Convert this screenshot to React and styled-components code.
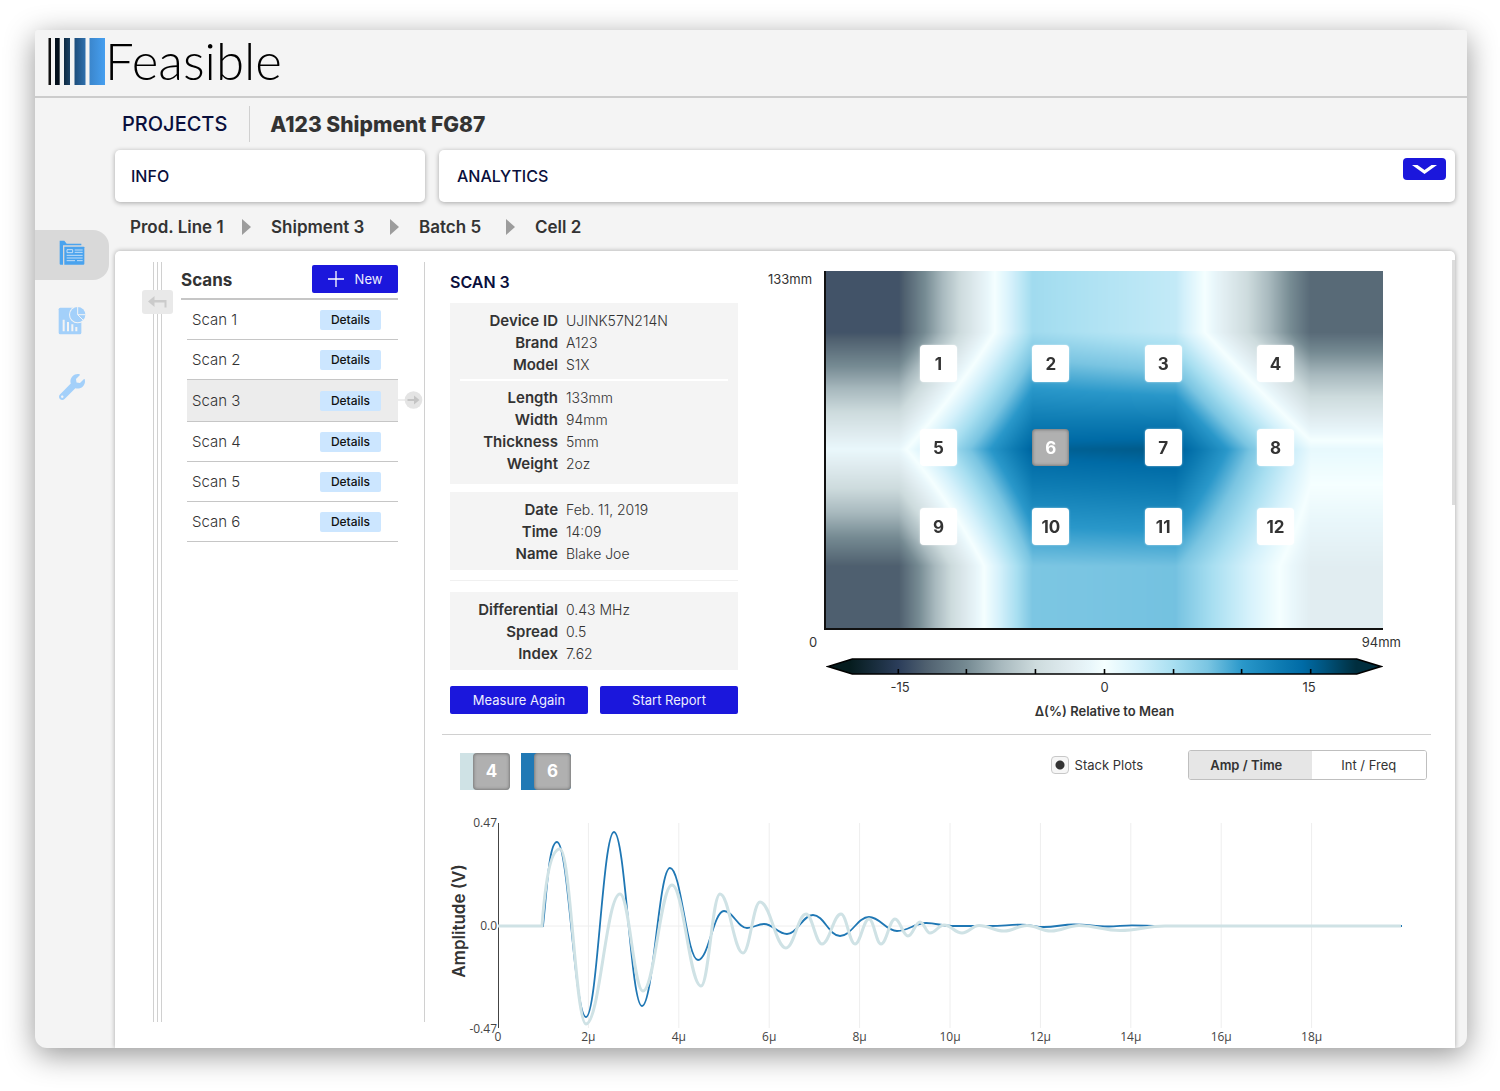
import React, { useEffect, useRef } from "react";
import styled, { createGlobalStyle } from "styled-components";
import { FaWrench } from "react-icons/fa";

const c = {
  page: "#f4f4f4",
  navy: "#0a0f3c",
  text: "#333333",
  line: "#d0d0d0",
  blue: "#1b17dc",
  sky: "#cce6ff",
  icon: "#4aa3ee",
  iconSoft: "#a3d0fa",
  grey: "#b0b0b0",
};

const GlobalStyle = createGlobalStyle`
  *, *::before, *::after { box-sizing: border-box; }
  body {
    margin: 0;
    background: #fff;
    color: ${c.text};
    font-family: Inter, "Open Sans", "Liberation Sans", sans-serif;
  }
  button, input { font-family: inherit; }
  button { cursor: pointer; }
  h1, h2, dl, dd, ol, ul { margin: 0; padding: 0; }
  ol, ul { list-style: none; }
`;

const Page = styled.div`
  padding: 30px 33px 43px 35px;
`;

const Window = styled.div`
  background: ${c.page};
  border-radius: 3px 3px 12px 12px;
  box-shadow: 0 7px 30px rgba(0, 0, 0, 0.42);
`;

const Header = styled.header`
  display: flex;
  align-items: center;
  height: 68px;
  padding: 0 13px 4px;
  border-bottom: 2px solid #cccccc;
`;

const Brand = styled.a`
  display: flex;
  align-items: center;
  color: #000;
  text-decoration: none;
  font: 300 51px/60px Lato, "Open Sans", sans-serif;
`;

const Body = styled.div`
  display: flex;
`;

const Sidebar = styled.nav`
  display: flex;
  flex-direction: column;
  gap: 16px;
  width: 80px;
  padding: 132px 6px 0 0;
`;

const NavLink = styled.a`
  display: flex;
  align-items: center;
  justify-content: center;
  height: 50px;
  padding-bottom: ${(p) => (p.$active ? "4px" : "0")};
  border-radius: 0 16px 16px 0;
  background: ${(p) => (p.$active ? "#d9d9d9" : "transparent")};
  color: ${c.iconSoft};
`;

const Content = styled.main`
  flex: 1;
  min-width: 0;
  padding-right: 12px;
`;

const TitleRow = styled.div`
  display: flex;
  align-items: center;
  height: 52px;
  padding: 0 7px;
`;

const Section = styled.h1`
  padding-right: 22px;
  border-right: 1px solid ${c.line};
  color: ${c.navy};
  font-size: 20px;
  font-weight: 500;
  line-height: 36px;
`;

const ProjectName = styled.h2`
  padding-left: 20px;
  font-size: 21px;
  font-weight: 800;
`;

const Cards = styled.div`
  display: flex;
  gap: 14px;
`;

const Card = styled.section`
  display: flex;
  flex: ${(p) => (p.$wide ? "1" : "0 0 310px")};
  justify-content: space-between;
  height: 52px;
  padding: 8px 9px 8px ${(p) => (p.$wide ? "18px" : "16px")};
  border-radius: 5px;
  background: #fff;
  box-shadow: 0 1px 5px rgba(0, 0, 0, 0.32);
`;

const CardTitle = styled.h2`
  color: ${c.navy};
  font-size: 16px;
  font-weight: 500;
  line-height: 36px;
`;

const Expand = styled.button`
  display: flex;
  align-items: center;
  justify-content: center;
  width: 43px;
  height: 22px;
  padding: 0;
  border: 0;
  border-radius: 4px;
  background: ${c.blue};
`;

const Crumbs = styled.ol`
  display: flex;
  padding-left: 15px;
`;

const Crumb = styled.li`
  display: flex;
  align-items: center;
  justify-content: space-between;
  width: ${(p) => p.$width}px;
  height: 49px;
  padding-right: 20px;
  white-space: nowrap;

  a {
    color: ${c.text};
    font-size: 17px;
    font-weight: 600;
    text-decoration: none;
  }
`;

const Panel = styled.div`
  display: flex;
  position: relative;
  padding-left: 27px;
  padding-right: 24px;
  border-radius: 5px 5px 0 0;
  background: #fff;
  box-shadow: 0 0 5px rgba(0, 0, 0, 0.32);
  clip-path: inset(-6px -6px 0 -6px);
`;

const ScrollThumb = styled.div`
  position: absolute;
  top: 9px;
  right: 0;
  width: 3px;
  height: 245px;
  background: #dcdcdc;
`;

const Rail = styled.div`
  display: flex;
  justify-content: center;
  width: 31px;
  margin: 11px 0 26px;
`;

const RailLines = styled.div`
  position: relative;
  display: flex;
  justify-content: space-between;
  width: 9px;
  border: solid ${c.line};
  border-width: 0 1px;

  &::before {
    content: "";
    width: 1px;
    margin: 0 auto;
    background: ${c.line};
  }
`;

const BackButton = styled.button`
  position: absolute;
  top: 28px;
  left: -12px;
  width: 31px;
  height: 24px;
  padding: 0;
  border: 0;
  border-radius: 3px;
  background: #e9e9e9;

  svg { display: block; margin: auto; }
`;

const Scans = styled.section`
  width: 252px;
  margin: 11px 0 26px;
  padding: 3px 26px 0 8px;
  border-right: 1px solid ${c.line};
`;

const ScansHead = styled.div`
  display: flex;
  align-items: flex-start;
  justify-content: space-between;
  height: 35px;
  border-bottom: 2px solid #c6c6c6;

  h2 {
    font-size: 17px;
    font-weight: 700;
    line-height: 31px;
  }
`;

const Primary = styled.button`
  display: flex;
  flex: ${(p) => (p.$grow ? "1" : "0 0 86px")};
  align-items: center;
  justify-content: center;
  gap: 11px;
  height: 28px;
  padding: 0;
  border: 0;
  border-radius: 2px;
  background: ${c.blue};
  color: #eeeeff;
  font-size: 13px;
  font-weight: 400;
`;

const ScanList = styled.ul`
  padding-left: 6px;
`;

const ScanRow = styled.li`
  position: relative;
  display: flex;
  align-items: center;
  justify-content: space-between;
  height: ${(p) => (p.$active ? "42px" : "40px")};
  padding: 0 17px 0 5px;
  border-bottom: 1px solid #c6c6c6;
  background: ${(p) => (p.$active ? "#ececec" : "transparent")};
  font-size: 15px;
  font-weight: 300;
`;

const Details = styled.button`
  width: 61px;
  height: 20px;
  padding: 0;
  border: 0;
  border-radius: 2px;
  background: ${c.sky};
  color: #111;
  font-size: 12px;
  font-weight: 500;
`;

const RowArrow = styled.svg`
  position: absolute;
  top: 11px;
  left: 100%;
`;

const Main = styled.div`
  flex: 1;
  min-width: 0;
  padding-left: 17px;
`;

const Overview = styled.div`
  display: flex;
  gap: 30px;
  height: 484px;
  padding: 20px 0 0 8px;
  border-bottom: 1px solid ${c.line};
`;

const Facts = styled.section`
  display: flex;
  flex-direction: column;
  flex: 0 0 288px;
`;

const ScanTitle = styled.h2`
  color: ${c.navy};
  font-size: 16px;
  font-weight: 600;
  line-height: 22px;
  margin-bottom: 10px;
`;

const FactBox = styled.dl`
  margin-bottom: 8px;
  padding: 7px 10px ${(p) => (p.$tall ? "9px" : "5px")};
  background: ${c.page};
`;

const Fact = styled.div`
  display: flex;
  gap: 8px;
  font-size: 15px;
  line-height: 22px;

  dt {
    width: 98px;
    font-weight: 600;
    text-align: right;
  }
  dd {
    color: ${c.text};
    font-size: 14px;
    font-weight: 300;
  }
`;

const BoxRule = styled.div`
  height: 2px;
  margin: 3px 0 6px;
  background: #fff;
`;

const FaintRule = styled.hr`
  width: 100%;
  margin: 2px 0 11px;
  border: 0;
  border-top: 1px solid #f0f0f0;
`;

const Actions = styled.div`
  display: flex;
  gap: 12px;
  margin-top: 8px;
`;

const MapArea = styled.section`
  display: flex;
  flex: 1;
  min-width: 0;
  gap: 12px;
  font-size: 13px;
  line-height: 16px;
`;

const MapColumn = styled.div`
  flex: 1;
  min-width: 0;
`;

const YMax = styled.div`
  width: 44px;
  text-align: right;
`;

const Plot = styled.div`
  position: relative;
  height: 359px;
  margin-right: 48px;
  border: solid #111;
  border-width: 0 0 2px 2px;
`;

const HeatCanvas = styled.canvas`
  position: absolute;
  width: 100%;
  height: 100%;
`;

const Points = styled.div`
  position: relative;
  display: grid;
  grid-template-columns: repeat(4, 37px);
  grid-template-rows: 84px 79px 37px;
  justify-content: space-between;
  align-items: start;
  padding: 74px 89px 0 94px;
`;

const Point = styled.button`
  width: 37px;
  height: 37px;
  padding: 0;
  border: 0;
  border-radius: 4px;
  background: ${(p) => (p.$active ? c.grey : "#fff")};
  box-shadow: ${(p) => (p.$active ? "inset 0 0 3px 1px rgba(0,0,0,.3)" : "0 0 2px rgba(255,255,255,.7)")};
  color: ${(p) => (p.$active ? "#fff" : c.text)};
  font-size: 17px;
  font-weight: 700;
`;

const XLabels = styled.div`
  display: flex;
  justify-content: space-between;
  margin: 4px 30px 8px -15px;
`;

const BarArea = styled.div`
  margin: 0 48px 0 2px;

  svg { display: block; width: 100%; }
`;

const BarLabels = styled.div`
  display: flex;
  justify-content: space-between;
  padding: 4px 62px 8px;

  span {
    width: 24px;
    text-align: center;
  }
`;

const BarCaption = styled.div`
  font-weight: 600;
  text-align: center;
`;

const Signal = styled.section`
  svg { display: block; width: 100%; }
`;

const Toolbar = styled.div`
  display: flex;
  align-items: flex-start;
  justify-content: space-between;
  height: 65px;
  padding: 15px 4px 0 18px;
`;

const Group = styled.div`
  display: flex;
  align-items: center;
  gap: ${(p) => p.$gap}px;
`;

const Chip = styled.button`
  width: 50px;
  height: 37px;
  margin-top: 3px;
  padding: 0 0 0 13px;
  border: 0;
  border-radius: 0 4px 4px 0;
  background: ${(p) => p.$color};
  color: #fff;
  font-size: 17px;
  font-weight: 700;

  span {
    display: block;
    border-radius: 4px;
    background: ${c.grey};
    box-shadow: inset 0 0 3px 1px rgba(0, 0, 0, 0.3);
    line-height: 37px;
  }
`;

const Check = styled.label`
  display: flex;
  align-items: center;
  gap: 6px;
  font-size: 13px;

  input {
    appearance: none;
    width: 18px;
    height: 18px;
    margin: 0;
    border: 1px solid #c8c8c8;
    border-radius: 4px;
    background: #f6f6f6;
  }
  input:checked {
    background: radial-gradient(circle, ${c.text} 4px, #f6f6f6 5px);
  }
`;

const Segments = styled.div`
  display: flex;
  overflow: hidden;
  width: 239px;
  height: 30px;
  border: 1px solid #bfbfbf;
  border-radius: 3px;
`;

const Segment = styled.button`
  flex: 1;
  padding: 0 ${(p) => (p.$active ? "8px" : "0")} 0 0;
  border: 0;
  background: ${(p) => (p.$active ? "#e6e6e6" : "#fff")};
  color: ${c.text};
  font-size: 13px;
  font-weight: ${(p) => (p.$active ? 600 : 400)};
`;

/* ---------- heat map ---------- */

const scale = [
  [-18.5, 5, 28, 30],
  [-15, 43, 61, 90],
  [-12.9, 80, 97, 112],
  [-10, 118, 139, 147],
  [-7.5, 168, 185, 190],
  [-5, 205, 219, 221],
  [-2.5, 224, 236, 240],
  [-1, 233, 247, 251],
  [0, 245, 255, 255],
  [2.4, 212, 241, 251],
  [5, 168, 223, 241],
  [7.5, 122, 197, 226],
  [10, 42, 152, 202],
  [12.7, 14, 124, 179],
  [14.4, 0, 107, 166],
  [16, 0, 84, 126],
  [18.3, 0, 46, 62],
];

const nodesX = [0.13, 0.37, 0.627, 0.869];
const nodesY = [0.17, 0.498, 0.825];
const readings = [
  [-13.7, 5.4, 3.4, -12.3],
  [-0.9, 15, 15.6, 1],
  [-13, 7.4, 7.7, -2.3],
];

function colorAt(v) {
  let i = 1;
  while (i < scale.length - 1 && v > scale[i][0]) i++;
  const a = scale[i - 1];
  const b = scale[i];
  const t = Math.min(1, Math.max(0, (v - a[0]) / (b[0] - a[0])));
  return [1, 2, 3].map((k) => a[k] + (b[k] - a[k]) * t);
}

function locate(nodes, p) {
  if (p <= nodes[0]) return [0, 0];
  for (let i = 1; i < nodes.length; i++) {
    if (p <= nodes[i]) return [i - 1, (p - nodes[i - 1]) / (nodes[i] - nodes[i - 1])];
  }
  return [nodes.length - 2, 1];
}

function HeatMap() {
  const ref = useRef(null);
  useEffect(() => {
    const canvas = ref.current;
    const { width, height } = canvas;
    const ctx = canvas.getContext("2d");
    const image = ctx.createImageData(width, height);
    for (let y = 0; y < height; y++) {
      const [r, ty] = locate(nodesY, y / height);
      for (let x = 0; x < width; x++) {
        const [q, tx] = locate(nodesX, x / width);
        const top = readings[r][q] * (1 - tx) + readings[r][q + 1] * tx;
        const low = readings[r + 1][q] * (1 - tx) + readings[r + 1][q + 1] * tx;
        image.data.set([...colorAt(top * (1 - ty) + low * ty), 255], (y * width + x) * 4);
      }
    }
    ctx.putImageData(image, 0, 0);
  }, []);
  return <HeatCanvas ref={ref} width={558} height={358} role="img" aria-label="Heat map" />;
}

function ColorBar() {
  return (
    <svg viewBox="0 0 556 17" aria-hidden="true">
      <defs>
        <linearGradient id="scale" gradientUnits="userSpaceOnUse" x1="0" x2="556" y1="0" y2="0">
          {scale.map(([v, r, g, b]) => (
            <stop key={v} offset={(278 + v * 13.75) / 556} stopColor={`rgb(${r},${g},${b})`} />
          ))}
        </linearGradient>
      </defs>
      <path d="M2 8.5 26 1H530L554 8.5 530 16H26Z" fill="url(#scale)" stroke="#000" strokeWidth="1.6" />
      {[72, 140, 209, 278, 347, 415, 484].map((x) => (
        <path key={x} d={`M${x} 11V16`} stroke="#000" strokeWidth="1.6" />
      ))}
    </svg>
  );
}

/* ---------- wave forms ---------- */

const wave6 = [
  [557, 842], [586, 1017], [614, 832], [642, 1006], [670, 868], [698, 960], [724, 911],
  [747, 928], [764, 924], [787, 934], [813, 915], [840, 936], [869, 917], [897, 931],
  [926, 923], [952, 926], [990, 926], [1022, 924.6], [1044, 927], [1074, 924.5],
  [1108, 926.5], [1132, 925.4], [1160, 926], [1402, 926],
];
const wave4 = [
  [560, 849], [586, 1024], [620, 894], [643, 991], [672, 885], [701, 986], [720, 894],
  [743, 953], [760, 902], [786, 948], [806, 914], [822, 944], [841, 914], [855, 944],
  [869, 919], [881, 944], [895, 919], [908, 936], [920, 922], [930, 933], [944, 925],
  [962, 933], [979, 925.5], [1004, 931], [1027, 925.5], [1051, 931], [1079, 925.5],
  [1120, 930.5], [1165, 926], [1401, 926],
];

function curve(start, points) {
  let d = start;
  for (let i = 1; i < points.length; i++) {
    const [x0, y0] = points[i - 1];
    const [x1, y1] = points[i];
    const k = (x1 - x0) * 0.4;
    d += `C${x0 + k} ${y0} ${x1 - k} ${y1} ${x1} ${y1}`;
  }
  return d;
}

function WaveChart() {
  const ticks = [0, 2, 4, 6, 8, 10, 12, 14, 16, 18];
  const axis = { fontFamily: '"Open Sans", "Noto Sans", sans-serif', fontSize: 12, fill: "#444" };
  return (
    <svg viewBox="442 800 989 248" role="img" aria-label="Amplitude over time">
      {ticks.slice(1).map((t) => (
        <path key={t} d={`M${498 + t * 45.2} 823V1028`} stroke="#eeeeee" />
      ))}
      <path d="M498 926H1402" stroke="#eeeeee" />
      <path d="M498.5 823V1028" stroke="#444" />
      <g {...axis} textAnchor="end">
        <text x="497" y="827">0.47</text>
        <text x="497" y="930">0.0</text>
        <text x="497" y="1033">-0.47</text>
      </g>
      <g {...axis} textAnchor="middle">
        {ticks.map((t) => (
          <text key={t} x={498 + t * 45.2} y="1041">{t ? `${t}µ` : "0"}</text>
        ))}
      </g>
      <text transform="translate(465 921) rotate(-90)" textAnchor="middle" fontSize="17" fontWeight="600" fill={c.text}>
        Amplitude (V)
      </text>
      <path d={curve("M498 926H543C547 890 549 842 557 842", wave6)} fill="none" stroke="#1f77b4" strokeWidth="1.8" />
      <path d={curve("M498 926H542C546 872 552 849 560 849", wave4)} fill="none" stroke="#cfe2e5" strokeWidth="3" />
    </svg>
  );
}

/* ---------- icons ---------- */

const LogoMark = () => (
  <svg width="57" height="47" viewBox="0 0 57 47" aria-hidden="true">
    <defs>
      <linearGradient id="b3"><stop stopColor="#0f2a42" /><stop offset="1" stopColor="#1b4366" /></linearGradient>
      <linearGradient id="b4"><stop stopColor="#1d4d7b" /><stop offset="1" stopColor="#2f70ad" /></linearGradient>
      <linearGradient id="b5"><stop stopColor="#3b86cc" /><stop offset="1" stopColor="#469ff0" /></linearGradient>
    </defs>
    <path d="M.5 0h2.500v47H.5z" fill="#111" />
    <path d="M7 0h4.700v47H7z" fill="#04101c" />
    <path d="M16 0h6v47h-6z" fill="url(#b3)" />
    <path d="M26.500 0h11v47h-11z" fill="url(#b4)" />
    <path d="M41.500 0h15.500v47H41.500z" fill="url(#b5)" />
  </svg>
);

const FolderIcon = () => (
  <svg width="26" height="26" viewBox="0 0 78 78" aria-hidden="true">
    <path d="M2 2h14l7 9h44v5H12v58H5q-3 0-3-3z" fill={c.icon} />
    <path d="M16 20h58q2 0 2 2v49q0 3-3 3H16z" fill={c.icon} />
    <g fill="none" stroke="#dcebf8" strokeWidth="2.500">
      <path d="M24 29h17v9H24zM47 30h24M47 37h24M23 46h48M23 54h48M23 62h25M54 62h17" />
    </g>
  </svg>
);

const ReportIcon = () => (
  <svg width="28" height="28" viewBox="0 0 84 84" aria-hidden="true">
    <rect x="2" y="2" width="68" height="80" rx="5" fill={c.iconSoft} />
    <circle cx="59" cy="23" r="26" fill={c.page} />
    <circle cx="59" cy="23" r="23" fill={c.iconSoft} />
    <path d="M59 0v23l17 17M59 23h24" fill="none" stroke={c.page} strokeWidth="3" />
    <path d="M17 38v35M30 45v28M43 52v21M55 60v13" stroke={c.page} strokeWidth="6" />
  </svg>
);

const Triangle = () => (
  <svg width="9" height="16" viewBox="0 0 9 16" aria-hidden="true">
    <path d="M0 0 9 8 0 16Z" fill="#9c9c9c" />
  </svg>
);

/* ---------- data ---------- */

const crumbs = [["Prod. Line 1", 141], ["Shipment 3", 148], ["Batch 5", 116], ["Cell 2", 90]];
const device = [["Device ID", "UJINK57N214N"], ["Brand", "A123"], ["Model", "S1X"]];
const sizes = [["Length", "133mm"], ["Width", "94mm"], ["Thickness", "5mm"], ["Weight", "2oz"]];
const record = [["Date", "Feb. 11, 2019"], ["Time", "14:09"], ["Name", "Blake Joe"]];
const results = [["Differential", "0.43 MHz"], ["Spread", "0.5"], ["Index", "7.62"]];

const FactRows = ({ rows }) =>
  rows.map(([name, value]) => (
    <Fact key={name}>
      <dt>{name}</dt>
      <dd>{value}</dd>
    </Fact>
  ));

export default function App() {
  return (
    <>
      <GlobalStyle />
      <Page>
        <Window>
          <Header>
            <Brand href="#home"><LogoMark />Feasible</Brand>
          </Header>
          <Body>
            <Sidebar aria-label="Sections">
              <NavLink href="#projects" aria-label="Projects" $active><FolderIcon /></NavLink>
              <NavLink href="#reports" aria-label="Reports"><ReportIcon /></NavLink>
              <NavLink href="#tools" aria-label="Tools"><FaWrench size={26} /></NavLink>
            </Sidebar>
            <Content>
              <TitleRow>
                <Section>PROJECTS</Section>
                <ProjectName>A123 Shipment FG87</ProjectName>
              </TitleRow>
              <Cards>
                <Card><CardTitle>INFO</CardTitle></Card>
                <Card $wide>
                  <CardTitle>ANALYTICS</CardTitle>
                  <Expand aria-label="Expand analytics">
                    <svg width="25" height="9" viewBox="0 0 25 9" aria-hidden="true">
                      <path d="M0 0H5.500L12.500 5 19.500 0H25L12.500 9Z" fill="#fff" />
                    </svg>
                  </Expand>
                </Card>
              </Cards>
              <Crumbs>
                {crumbs.map(([name, width], i) => (
                  <Crumb key={name} $width={width}>
                    <a href="#crumb">{name}</a>
                    {i < crumbs.length - 1 && <Triangle />}
                  </Crumb>
                ))}
              </Crumbs>
              <Panel>
                <ScrollThumb />
                <Rail>
                  <RailLines>
                    <BackButton aria-label="Back">
                      <svg width="19" height="12" viewBox="0 0 19 12" aria-hidden="true">
                        <path d="M0 5.500 6.500 0V4H18.500V11.500H16.500V6.500H6.500V11Z" fill="#cbcbcb" />
                      </svg>
                    </BackButton>
                  </RailLines>
                </Rail>
                <Scans>
                  <ScansHead>
                    <h2>Scans</h2>
                    <Primary>
                      <svg width="16" height="16" viewBox="0 0 16 16" aria-hidden="true">
                        <path d="M8 0V16M0 8H16" stroke="#fff" strokeWidth="1.300" />
                      </svg>
                      New
                    </Primary>
                  </ScansHead>
                  <ScanList>
                    {[1, 2, 3, 4, 5, 6].map((n) => (
                      <ScanRow key={n} $active={n === 3}>
                        Scan {n}
                        <Details>Details</Details>
                        {n === 3 && (
                          <RowArrow width="25" height="18" viewBox="0 0 25 18" aria-hidden="true">
                            <path d="M0 9H7" stroke="#ddd" />
                            <circle cx="15.500" cy="9" r="8.800" fill="#e4e4e4" />
                            <path d="M9.500 8H16V4.500L21.500 9 16 13.500V10H9.500Z" fill="#c4c4c4" />
                          </RowArrow>
                        )}
                      </ScanRow>
                    ))}
                  </ScanList>
                </Scans>
                <Main>
                  <Overview>
                    <Facts>
                      <ScanTitle>SCAN 3</ScanTitle>
                      <FactBox $tall>
                        <FactRows rows={device} />
                        <BoxRule />
                        <FactRows rows={sizes} />
                      </FactBox>
                      <FactBox><FactRows rows={record} /></FactBox>
                      <FaintRule />
                      <FactBox><FactRows rows={results} /></FactBox>
                      <Actions>
                        <Primary $grow>Measure Again</Primary>
                        <Primary $grow>Start Report</Primary>
                      </Actions>
                    </Facts>
                    <MapArea>
                      <YMax>133mm</YMax>
                      <MapColumn>
                        <Plot>
                          <HeatMap />
                          <Points>
                            {[1, 2, 3, 4, 5, 6, 7, 8, 9, 10, 11, 12].map((n) => (
                              <Point key={n} $active={n === 6}>{n}</Point>
                            ))}
                          </Points>
                        </Plot>
                        <XLabels><span>0</span><span>94mm</span></XLabels>
                        <BarArea>
                          <ColorBar />
                          <BarLabels><span>-15</span><span>0</span><span>15</span></BarLabels>
                          <BarCaption>Δ(%) Relative to Mean</BarCaption>
                        </BarArea>
                      </MapColumn>
                    </MapArea>
                  </Overview>
                  <Signal>
                    <Toolbar>
                      <Group $gap={11}>
                        <Chip $color="#cfe2e5"><span>4</span></Chip>
                        <Chip $color="#2179b5"><span>6</span></Chip>
                      </Group>
                      <Group $gap={45}>
                        <Check><input type="checkbox" defaultChecked />Stack Plots</Check>
                        <Segments>
                          <Segment $active aria-pressed="true">Amp / Time</Segment>
                          <Segment aria-pressed="false">Int / Freq</Segment>
                        </Segments>
                      </Group>
                    </Toolbar>
                    <WaveChart />
                  </Signal>
                </Main>
              </Panel>
            </Content>
          </Body>
        </Window>
      </Page>
    </>
  );
}
